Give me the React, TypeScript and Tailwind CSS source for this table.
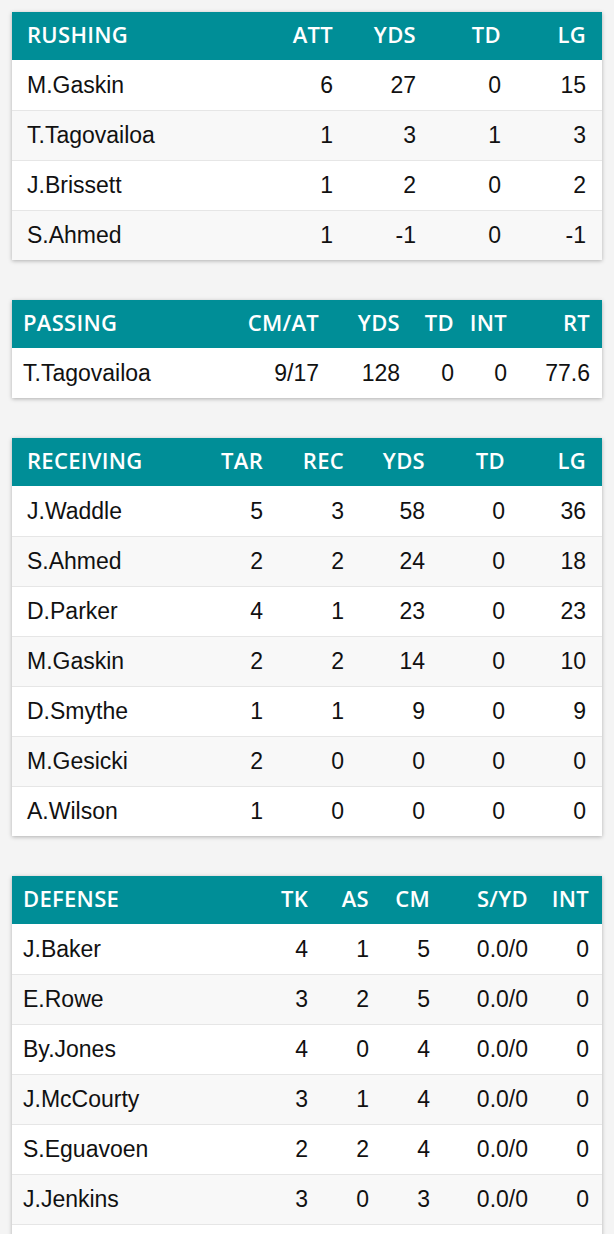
import React from "react";

type Table = {
  title: string;
  cols: string[];
  grid: string;
  pad: string;
  rows: (string | number)[][];
  more?: boolean;
};

const tables: Table[] = [
  {
    title: "RUSHING",
    cols: ["ATT", "YDS", "TD", "LG"],
    grid: "grid-cols-[1fr_85px_83px_85px_85px]",
    pad: "pl-[15px] pr-[16px]",
    rows: [
      ["M.Gaskin", 6, 27, 0, 15],
      ["T.Tagovailoa", 1, 3, 1, 3],
      ["J.Brissett", 1, 2, 0, 2],
      ["S.Ahmed", 1, -1, 0, -1],
    ],
  },
  {
    title: "PASSING",
    cols: ["CM/AT", "YDS", "TD", "INT", "RT"],
    grid: "grid-cols-[1fr_90px_81px_54px_53px_83px]",
    pad: "pl-[11px] pr-[12px]",
    rows: [["T.Tagovailoa", "9/17", 128, 0, 0, "77.6"]],
  },
  {
    title: "RECEIVING",
    cols: ["TAR", "REC", "YDS", "TD", "LG"],
    grid: "grid-cols-[1fr_81px_81px_81px_80px_81px]",
    pad: "pl-[15px] pr-[16px]",
    rows: [
      ["J.Waddle", 5, 3, 58, 0, 36],
      ["S.Ahmed", 2, 2, 24, 0, 18],
      ["D.Parker", 4, 1, 23, 0, 23],
      ["M.Gaskin", 2, 2, 14, 0, 10],
      ["D.Smythe", 1, 1, 9, 0, 9],
      ["M.Gesicki", 2, 0, 0, 0, 0],
      ["A.Wilson", 1, 0, 0, 0, 0],
    ],
  },
  {
    title: "DEFENSE",
    cols: ["TK", "AS", "CM", "S/YD", "INT"],
    grid: "grid-cols-[1fr_61px_61px_61px_98px_61px]",
    pad: "pl-[11px] pr-[13px]",
    rows: [
      ["J.Baker", 4, 1, 5, "0.0/0", 0],
      ["E.Rowe", 3, 2, 5, "0.0/0", 0],
      ["By.Jones", 4, 0, 4, "0.0/0", 0],
      ["J.McCourty", 3, 1, 4, "0.0/0", 0],
      ["S.Eguavoen", 2, 2, 4, "0.0/0", 0],
      ["J.Jenkins", 3, 0, 3, "0.0/0", 0],
    ],
    more: true,
  },
];

function StatTable({ t }: { t: Table }) {
  return (
    <div className="bg-white shadow-[0_1px_4px_rgba(0,0,0,0.28)]">
      <div
        className={`grid ${t.grid} ${t.pad} h-[48px] pb-[4px] items-center bg-[#008e97] text-white text-[22px] leading-[28px] font-semibold font-['Open_Sans',sans-serif] tracking-[0.3px]`}
      >
        <div>{t.title}</div>
        {t.cols.map((c) => (
          <div key={c} className="text-right">
            {c}
          </div>
        ))}
      </div>
      {t.rows.map((r, i) => (
        <div
          key={i}
          className={`grid ${t.grid} ${t.pad} h-[50px] items-center text-[23px] text-[#111] font-['Liberation_Sans',Arial,sans-serif] ${
            i > 0 ? "border-t border-[#e6e6e6]" : ""
          } ${i % 2 === 1 ? "bg-[#f8f8f8]" : "bg-white"}`}
        >
          {r.map((v, j) => (
            <div key={j} className={j === 0 ? "" : "text-right"}>
              {v}
            </div>
          ))}
        </div>
      ))}
      {t.more ? <div className="h-[50px] border-t border-[#e6e6e6] bg-white" /> : null}
    </div>
  );
}

export default function App() {
  return (
    <div className="min-h-screen bg-[#f4f4f4] px-[12px] pt-[12px] pb-[40px] flex flex-col gap-[40px]">
      {tables.map((t) => (
        <StatTable key={t.title} t={t} />
      ))}
    </div>
  );
}
